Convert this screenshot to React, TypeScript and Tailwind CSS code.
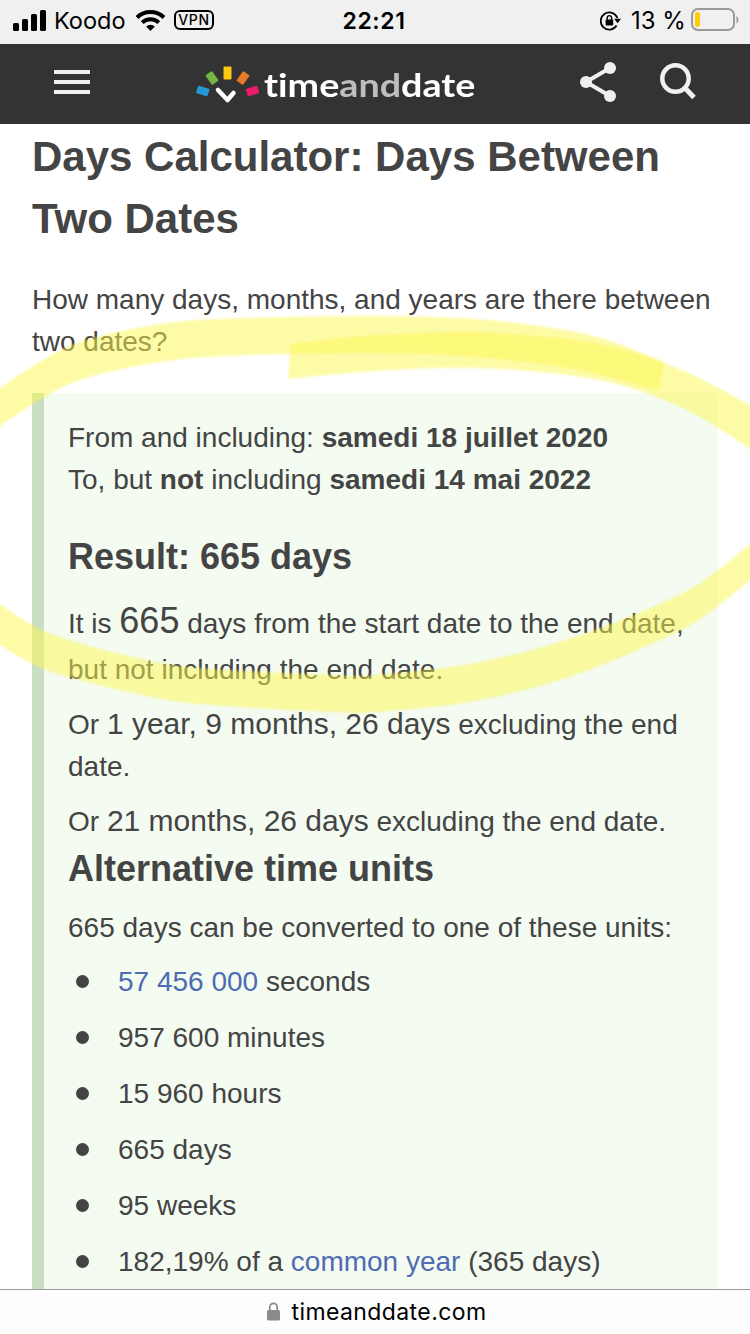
import { ReactNode } from "react";

const StatusBar = () => {
  return (
    <div className="h-11 shrink-0 bg-[#f0f0f0] text-black flex items-center justify-between pl-[13px] pr-[11px] pb-[3px] font-['Inter',sans-serif]">
      <div className="w-[296px] flex items-center">
        <svg className="-mt-px" width="33" height="22" viewBox="0 0 33 22">
          <rect x="0" y="14" width="6" height="8" rx="1.5" />
          <rect x="9" y="10" width="6" height="12" rx="1.5" />
          <rect x="18" y="5" width="6" height="17" rx="1.5" />
          <rect x="27" y="1" width="6" height="21" rx="1.5" />
        </svg>
        <span className="ml-[8px] w-[73px] text-[23.5px] leading-none whitespace-nowrap">Koodo</span>
        <svg className="ml-[8px] -mt-px" width="31" height="22" viewBox="0 0 31 22">
          <g fill="none" stroke="#000" strokeWidth="4">
            <path d="M2 8.5a19.5 19.5 0 0 1 27 0" />
            <path d="M7.2 13.6a12 12 0 0 1 16.6 0" />
          </g>
          <path d="M15.5 22l-4.3-4.4a6.2 6.2 0 0 1 8.6 0z" />
        </svg>
        <span className="ml-[8px] -mt-px w-10 h-5 rounded-[6px] border-2 border-black flex items-center justify-center text-[14px] font-medium tracking-[0.6px] leading-none">
          VPN
        </span>
      </div>
      <div className="mt-px text-[23px] font-semibold tracking-[0.6px] leading-none">22:21</div>
      <div className="w-[300px] flex items-center justify-end">
        <svg width="21" height="20" viewBox="0 0 21 20">
          <path
            d="M16.6 14.6A8.6 8.6 0 1 1 17.4 7"
            fill="none"
            stroke="#000"
            strokeWidth="1.8"
          />
          <path d="M14.2 7.8h6.8l-3.4 4.4z" />
          <rect x="5.6" y="8.5" width="7.6" height="6" rx="1" />
          <path d="M7.2 9V6.8a2.2 2.2 0 0 1 4.4 0V9" fill="none" stroke="#000" strokeWidth="1.4" />
        </svg>
        <span className="ml-[10px] mt-px w-[54px] text-[24px] leading-none whitespace-nowrap">13 %</span>
        <svg className="ml-[6px] -mt-[2px]" width="48" height="24" viewBox="0 0 48 24">
          <rect x="1" y="1" width="42" height="21" rx="6" fill="none" stroke="#9a9a9a" strokeWidth="2" />
          <rect x="4" y="4" width="5" height="15" rx="2.5" fill="#fc0" />
          <path d="M45.5 8c2.6 1.4 2.6 6 0 7.4z" fill="#9a9a9a" />
        </svg>
      </div>
    </div>
  );
};

const Logo = () => {
  return (
    <div className="flex items-center">
      <svg width="64" height="38" viewBox="0 0 64 38">
        <rect x="-6" y="-4" width="12" height="8" rx="1" fill="#2499d6" transform="translate(6.8 25) rotate(17)" />
        <rect x="-6" y="-4" width="12" height="8" rx="1" fill="#73b743" transform="translate(16 12) rotate(54)" />
        <rect x="27.5" y="0.5" width="8" height="13" rx="1" fill="#fdc70f" />
        <rect x="-6" y="-4" width="12" height="8" rx="1" fill="#e87a28" transform="translate(47 12) rotate(-54)" />
        <rect x="-6" y="-4" width="12" height="8" rx="1" fill="#ec1a68" transform="translate(56.5 25) rotate(-17)" />
        <path
          d="M22 24l9.5 10 6-7"
          fill="none"
          stroke="#fff"
          strokeWidth="4.5"
          strokeLinecap="round"
          strokeLinejoin="round"
        />
      </svg>
      <span className="ml-[4px] -mt-[2px] origin-left scale-x-[1.142] [font-variant-ligatures:none] text-[33px] font-bold leading-none text-white font-['Lato',sans-serif] whitespace-nowrap">
        time<span className="text-[#bebebe]">and</span>date
      </span>
    </div>
  );
};

const Header = () => {
  return (
    <div className="h-20 shrink-0 bg-[#333] flex items-start">
      <div className="ml-[54px] mt-[26px] w-9 flex flex-col gap-[6px]">
        <div className="h-1 bg-[#f0f0f0]" />
        <div className="h-1 bg-[#f0f0f0]" />
        <div className="h-1 bg-[#f0f0f0]" />
      </div>
      <div className="ml-[106px] mt-[22px] w-[280px]">
        <Logo />
      </div>
      <svg className="ml-[104px] mt-[18px]" width="36" height="40" viewBox="0 0 36 40">
        <path d="M30 6L6 20l24 14" fill="none" stroke="#f0f0f0" strokeWidth="4" />
        <circle cx="30" cy="6" r="6" fill="#f0f0f0" />
        <circle cx="6" cy="20" r="6" fill="#f0f0f0" />
        <circle cx="30" cy="34" r="6" fill="#f0f0f0" />
      </svg>
      <svg className="ml-[44px] mt-[19px]" width="36" height="37" viewBox="0 0 36 37">
        <circle cx="15.5" cy="15.5" r="13.2" fill="none" stroke="#f0f0f0" strokeWidth="4.5" />
        <path d="M24.5 24.5L34 34.5" stroke="#f0f0f0" strokeWidth="5" />
      </svg>
    </div>
  );
};

const units: ReactNode[] = [
  <>
    <span className="text-[#4e6bb4]">57 456 000</span> seconds
  </>,
  "957 600 minutes",
  "15 960 hours",
  "665 days",
  "95 weeks",
  <>
    182,19% of a <span className="text-[#4e6bb4]">common year</span> (365 days)
  </>,
];

const Result = () => {
  return (
    <div className="mt-[30px] ml-8 mr-8 h-[896px] bg-[#f4fbf1] border-l-[12px] border-[#c9dfc3] pl-6 pt-6">
      <p>
        From and including: <b>samedi 18 juillet 2020</b>
        <br />
        To, but <b>not</b> including <b>samedi 14 mai 2022</b>
      </p>
      <h2 className="mt-[30px] text-[36px] leading-[52px] font-bold">Result: 665 days</h2>
      <p className="mt-[18px] leading-[46px] whitespace-nowrap">
        It is <span className="text-[36px] leading-none">665</span> days from the start date to the end date,
        <br />
        but not including the end date.
      </p>
      <p className="mt-[11px] whitespace-nowrap">
        Or <span className="text-[30px] leading-none">1 year, 9 months, 26 days</span> excluding the end
        <br />
        date.
      </p>
      <p className="mt-[13px] whitespace-nowrap">
        Or <span className="text-[30px] leading-none">21 months, 26 days</span> excluding the end date.
      </p>
      <h2 className="text-[36px] leading-[52px] font-bold">Alternative time units</h2>
      <p className="mt-[12px]">665 days can be converted to one of these units:</p>
      <ul className="mt-[12px] flex flex-col gap-[14px]">
        {units.map((unit, i) => (
          <li key={i} className="flex items-center whitespace-nowrap">
            <span className="ml-2 mr-[29px] -mt-[2px] size-[13px] rounded-full bg-[#444]" />
            <span>{unit}</span>
          </li>
        ))}
      </ul>
    </div>
  );
};

type Point = [number, number];

// smooth curve through the points, without the leading move
const curve = (p: Point[]) =>
  p
    .slice(1)
    .map(([x, y], i) => {
      const from = p[i];
      const before = p[i - 1] ?? from;
      const after = p[i + 2] ?? [x, y];
      const c1 = [from[0] + (x - before[0]) / 6, from[1] + (y - before[1]) / 6];
      const c2 = [x - (after[0] - from[0]) / 6, y - (after[1] - from[1]) / 6];
      return `C${c1} ${c2} ${x},${y}`;
    })
    .join("");

const band = (top: Point[], bottom: Point[]) => {
  const back = [...bottom].reverse();
  return `M${top[0]}${curve(top)}L${back[0]}${curve(back)}Z`;
};

const strokes = [
  band(
    [[291, 344], [375, 335], [475, 332], [560, 338], [620, 349], [664, 363], [705, 381], [762, 412]],
    [[288, 379], [375, 371], [475, 368], [575, 376], [640, 391], [700, 417], [762, 457]]
  ),
  band(
    [[-12, 595], [44, 631], [133, 657], [200, 668], [333, 675], [375, 675], [475, 663], [575, 637], [675, 597], [718, 570], [762, 534]],
    [[-12, 637], [44, 669], [133, 693], [200, 704], [333, 712], [375, 712], [475, 701], [575, 675], [675, 633], [718, 606], [762, 570]]
  ),
  band(
    [[-12, 397], [33, 366], [83, 341], [167, 323], [250, 318], [375, 316], [475, 319], [560, 329], [610, 341], [664, 362]],
    [[-12, 435], [33, 404], [83, 379], [167, 361], [250, 355], [375, 353], [475, 357], [575, 369], [659, 391]]
  ),
];

// highlighter circling the result, darker where the two ends overlap
const Marker = () => {
  return (
    <svg
      className="absolute left-0 top-0 pointer-events-none overflow-visible blur-[0.8px]"
      width="750"
      height="1334"
      viewBox="0 0 750 1334"
      fill="#fdf74f"
      fillOpacity="0.5"
    >
      {strokes.map((d, i) => (
        <path key={i} d={d} />
      ))}
    </svg>
  );
};

const App = () => {
  return (
    <div className="relative w-[750px] h-[1334px] overflow-hidden flex flex-col bg-white text-[#444] text-[28px] leading-[42px] font-['Liberation_Sans',Arial,sans-serif]">
      <StatusBar />
      <Header />
      <div className="h-[1165px] shrink-0 overflow-hidden">
        <h1 className="mt-[2px] ml-8 text-[42px] leading-[62px] font-bold">
          Days Calculator: Days Between
          <br />
          Two Dates
        </h1>
        <p className="mt-[29px] ml-8 whitespace-nowrap">
          How many days, months, and years are there between
          <br />
          two dates?
        </p>
        <Result />
      </div>
      <Marker />
      <div className="h-[45px] shrink-0 border-t border-[#999] bg-[#fdfdfd] pl-[3px] flex items-center justify-center text-black font-['Inter',sans-serif]">
        <svg className="-mt-px" width="13" height="19" viewBox="0 0 13 19">
          <rect x="0" y="8" width="13" height="10.5" rx="1.5" fill="#8a8a8e" />
          <path d="M2.8 9V5a3.7 3.7 0 0 1 7.4 0v4" fill="none" stroke="#8a8a8e" strokeWidth="1.7" />
        </svg>
        <span className="ml-[12px] text-[23px] tracking-[0.4px] leading-none">timeanddate.com</span>
      </div>
    </div>
  );
};

export default App;
